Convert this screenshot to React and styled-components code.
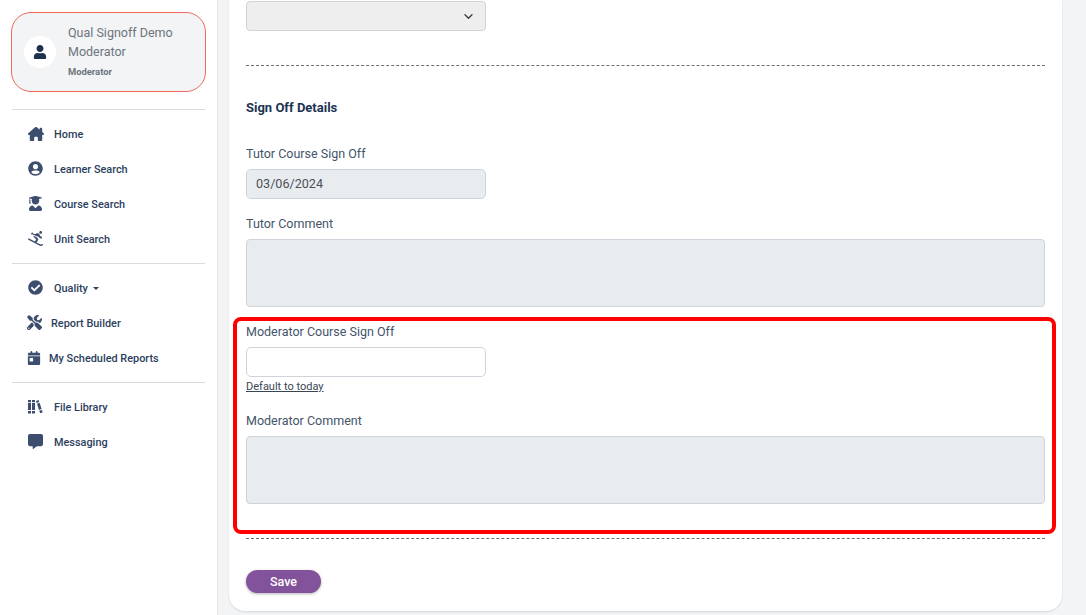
import React from "react";
import styled, { createGlobalStyle } from "styled-components";
import { FaUserCircle, FaUserGraduate, FaSkiing, FaCheckCircle, FaTools, FaCommentAlt, FaUser } from "react-icons/fa";
import { FaHouseChimney, FaCalendarDay } from "react-icons/fa6";

const Global = createGlobalStyle`
  html, body { margin: 0; padding: 0; height: 615px; overflow: hidden; background: #f3f4f6; }
  * { box-sizing: border-box; }
  body { font-family: Roboto, "Liberation Sans", sans-serif; color: #2c3e5d; }
`;

const Page = styled.div`
  display: flex;
  width: 1086px;
  height: 615px;
`;
const Sidebar = styled.aside`
  width: 218px;
  flex: none;
  background: #fff;
  border-right: 1px solid #e3e5e8;
  padding: 12px 11px 0 11px;
`;
const Profile = styled.div`
  display: flex;
  align-items: center;
  gap: 12px;
  height: 80px;
  padding: 0 12px;
  border: 1px solid #f0675e;
  border-radius: 20px;
  background: #f3f4f6;
`;
const Avatar = styled.div`
  width: 32px;
  height: 32px;
  flex: none;
  border-radius: 50%;
  background: #fff;
  display: flex;
  align-items: center;
  justify-content: center;
  color: #1c3050;
  font-size: 14px;
`;
const ProfileText = styled.div`
  display: flex;
  flex-direction: column;
  color: #6c757d;
  font-size: 12.5px;
  line-height: 19px;
`;
const Role = styled.span`
  font-size: 9.4px;
  font-weight: 700;
  line-height: 21px;
`;
const Divider = styled.hr`
  border: 0;
  height: 1px;
  background: #d9dbde;
  margin: ${(p) => p.$top}px 1px ${(p) => p.$bottom}px 1px;
`;
const Nav = styled.nav`
  display: flex;
  flex-direction: column;
`;
const NavItem = styled.a`
  display: flex;
  align-items: center;
  height: 35px;
  padding-left: ${(p) => p.$pad}px;
  font-size: 10.9px;
  font-weight: 500;
  color: #2c3e5d;
  svg { flex: none; color: #3c4d6e; }
`;
const IconSlot = styled.span`
  display: flex;
  width: ${(p) => p.$w}px;
  font-size: 15px;
  margin-top: -2px;
`;
const Caret = styled.span`
  width: 0;
  height: 0;
  margin-left: 5px;
  border-left: 3px solid transparent;
  border-right: 3px solid transparent;
  border-top: 3px solid #2c3e5d;
`;
const Main = styled.main`
  flex: 1;
  padding: 0 24px 4px 11px;
  min-width: 0;
`;
const Card = styled.section`
  height: 611px;
  background: #fff;
  border-radius: 0 0 16px 16px;
  box-shadow: 0 1px 2px rgba(0, 0, 0, 0.12);
  padding: 1px 17px 0;
  display: flex;
  flex-direction: column;
`;
const Select = styled.div`
  width: 240px;
  height: 30px;
  flex: none;
  background: #eeeeee;
  border: 1px solid #ced4da;
  border-radius: 4px;
  display: flex;
  align-items: center;
  justify-content: flex-end;
  padding-right: 12px;
`;
const Dashed = styled.div`
  height: 0;
  flex: none;
  border-top: 1px dashed #6f6f6f;
  margin-top: ${(p) => p.$top}px;
`;
const Heading = styled.h3`
  margin: 34px 0 0;
  font-size: 13px;
  line-height: 16px;
  font-weight: 700;
  color: #1d3353;
`;
const Label = styled.label`
  display: block;
  font-size: 12.5px;
  line-height: 16px;
  color: #44546a;
  margin-top: ${(p) => p.$top}px;
  margin-bottom: 7px;
`;
const Input = styled.div`
  width: 240px;
  height: 30px;
  flex: none;
  border: 1px solid #ced4da;
  border-radius: 5px;
  background: ${(p) => (p.$disabled ? "#e9ecef" : "#fff")};
  font-size: 12.6px;
  line-height: 28px;
  padding-left: 9px;
  color: #495057;
`;
const Area = styled.div`
  height: 68px;
  flex: none;
  border: 1px solid #ced4da;
  border-radius: 4px;
  background: #e9ecef;
`;
const Highlight = styled.div`
  flex: none;
  height: 217px;
  margin: 10px -11px 0 -13px;
  padding: 3px 7px 0 9px;
  border: 4px solid #ff0000;
  border-radius: 8px;
`;
const TodayLink = styled.a`
  display: block;
  font-size: 11px;
  line-height: 12px;
  margin-top: 4px;
  color: #3a4654;
  text-decoration: underline;
`;
const Save = styled.button`
  width: 75px;
  height: 23px;
  margin-top: 31px;
  flex: none;
  border: 0;
  border-radius: 12px;
  background: #82529a;
  color: #fff;
  font: 500 12.5px Roboto, sans-serif;
  box-shadow: 0 1px 3px rgba(0, 0, 0, 0.3);
  padding: 0;
`;

const Books = () => (
  <svg width="15" height="15" viewBox="0 0 15 15" fill="currentColor">
    <path d="M0 1h3v2.2H0zM0 4h3v7H0zM0 12h3v2.5H0zM4 1h3v2.2H4zM4 4h3v7H4zM4 12h3v2.5H4zM8 2l2.6-1 .6 2-2.6.9zM9 4.7l2.6-.9 2 6.3-2.6.9zM11.3 11.8l2.6-.9.8 2.4-2.6.9z" />
  </svg>
);
const Chevron = () => (
  <svg width="9" height="5" viewBox="0 0 9 5" fill="none" stroke="#343a40" strokeWidth="1.3" strokeLinecap="round" strokeLinejoin="round">
    <path d="M1 .8l3.5 3.4L8 .8" />
  </svg>
);

export default function App() {
  return (
    <Page>
      <Global />
      <Sidebar>
        <Profile>
          <Avatar><FaUser /></Avatar>
          <ProfileText>
            <span>Qual Signoff Demo</span>
            <span>Moderator</span>
            <Role>Moderator</Role>
          </ProfileText>
        </Profile>
        <Divider $top={17} $bottom={7} />
        <Nav>
          <NavItem $pad={17}><IconSlot $w={26}><FaHouseChimney size={16} /></IconSlot>Home</NavItem>
          <NavItem $pad={17}><IconSlot $w={26}><FaUserCircle /></IconSlot>Learner Search</NavItem>
          <NavItem $pad={17}><IconSlot $w={26}><FaUserGraduate /></IconSlot>Course Search</NavItem>
          <NavItem $pad={17}><IconSlot $w={26}><FaSkiing /></IconSlot>Unit Search</NavItem>
        </Nav>
        <Divider $top={6} $bottom={7} />
        <Nav>
          <NavItem $pad={17}><IconSlot $w={26}><FaCheckCircle /></IconSlot>Quality<Caret /></NavItem>
          <NavItem $pad={16}><IconSlot $w={24}><FaTools /></IconSlot>Report Builder</NavItem>
          <NavItem $pad={16}><IconSlot $w={22}><FaCalendarDay size={14} /></IconSlot>My Scheduled Reports</NavItem>
        </Nav>
        <Divider $top={6} $bottom={7} />
        <Nav>
          <NavItem $pad={17}><IconSlot $w={26}><Books /></IconSlot>File Library</NavItem>
          <NavItem $pad={17}><IconSlot $w={26}><FaCommentAlt /></IconSlot>Messaging</NavItem>
        </Nav>
      </Sidebar>
      <Main>
        <Card>
          <Select><Chevron /></Select>
          <Dashed $top={34} />
          <Heading>Sign Off Details</Heading>
          <Label $top={30}>Tutor Course Sign Off</Label>
          <Input $disabled>03/06/2024</Input>
          <Label $top={17}>Tutor Comment</Label>
          <Area />
          <Highlight>
            <Label $top={0}>Moderator Course Sign Off</Label>
            <Input />
            <TodayLink>Default to today</TodayLink>
            <Label $top={20}>Moderator Comment</Label>
            <Area />
          </Highlight>
          <Dashed $top={4} />
          <Save>Save</Save>
        </Card>
      </Main>
    </Page>
  );
}
